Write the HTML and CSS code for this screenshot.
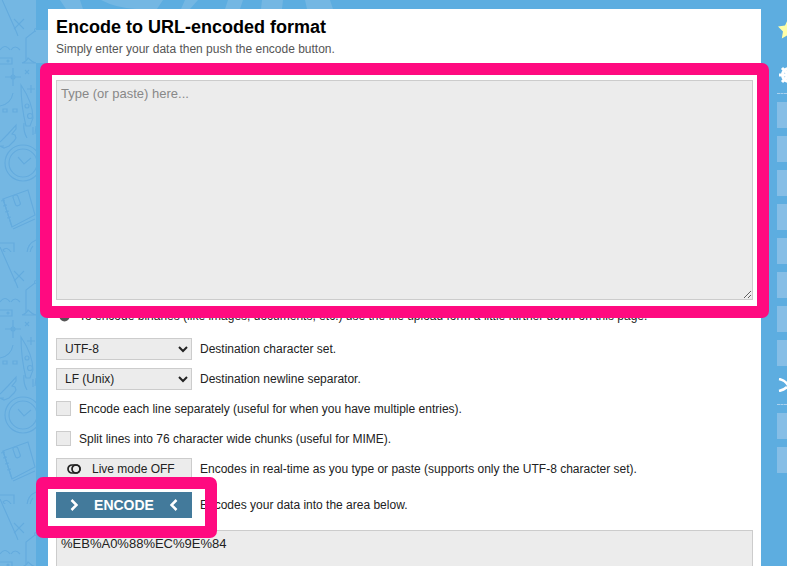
FILE: index.html
```html
<!DOCTYPE html>
<html lang="en">
<head>
<meta charset="utf-8">
<title>Encode to URL-encoded format</title>
<link rel="stylesheet" href="styles.css">
</head>
<body>
<svg class="backdrop" width="787" height="566" aria-hidden="true">
  <defs>
    <pattern id="doodle" width="48" height="252" patternUnits="userSpaceOnUse">
      <g class="doodle-lines">
        <path d="M14 19l10 10M24 19l-10 10"/>
        <path d="M0 -5l16 36 2 5M0 247l16 36"/>
        <path d="M26 60V38l9-7"/><circle cx="36" cy="30" r="1.5"/>
        <path d="M22 63q5-2 6-5q4 4 8 5z"/>
        <path d="M0 50q5-7 10 0M11 50q4-6 9 0"/>
        <path d="M-2 58h14v6H-2z"/><circle cx="8" cy="61" r="1"/>
        <path d="M5 77h16M13 68v18"/><circle cx="13" cy="77" r="2"/>
        <path d="M25 70l4 4M29 70l-4 4M27 89h8M31 85v8"/>
        <path d="M0 106q11-2 13-13"/>
        <path d="M3 109h4v3H3zM13 109h4v3H13z"/>
        <path d="M21 85q12 18 12 33l-3 8h-4q-5-20-5-41z"/>
        <circle cx="30" cy="116" r="2.5"/><circle cx="27" cy="106" r="2"/>
        <path d="M24 123q-1 8 3 15M33 127v8M36 126l-1 8"/>
        <path d="M0 142l8-8 8-9v4l-4 5 3 1 1 3-2 3-5 5-5 2-4-2M0 146l4 0"/>
        <circle cx="23" cy="163" r="18"/><circle cx="23" cy="163" r="14"/>
        <path d="M18 157l6 7 7-6"/>
        <path d="M3 199l25-9 7 25-23 12z"/>
        <path d="M3 199l9 28M1 201l4-1M3 206l4-1M5 212l4-1M7 218l4-1"/>
        <path d="M35 219l-22 10"/><rect x="14" y="195" width="5" height="11" rx="2" transform="rotate(-20 16 200)"/>
        <path d="M-2 243h16v14H-2zM-2 262h18M3 250q4-4 8 2q-4 3-8-2z"/>
        <path d="M36 240q-9 4-9 14t8 12M33 246q-3 3-3 8t3 7"/>
        <path d="M31 263v8"/>
      </g>
    </pattern>
  </defs>
  <path class="band" d="M0 0H36V30L48 30V63H36V566H0Z"/>
  <rect class="doodle-fill" x="0" y="0" width="36" height="566"/>
  <path class="band" d="M60 0H80L83 9H66ZM91 0H163L157 9H136Q116 8 101 0ZM185 0H198L190 9H181ZM228 0H243L240 9H225ZM262 0H283L282 9H261ZM305 0H330L333 9H307Z"/>
</svg>

<main class="card">
  <h1 class="title">Encode to URL-encoded format</h1>
  <p class="intro">Simply enter your data then push the encode button.</p>
  <textarea class="field source" placeholder="Type (or paste) here..."></textarea>
  <div class="note">
    <svg class="note-icon" viewBox="0 0 12 12" aria-hidden="true"><circle cx="6" cy="6" r="5.5"/></svg>
    <span>To encode binaries (like images, documents, etc.) use the file upload form a little further down on this page.</span>
  </div>
  <div class="row first-select">
    <select class="control"><option>UTF-8</option></select>
    <span>Destination character set.</span>
  </div>
  <div class="row second-select">
    <select class="control"><option>LF (Unix)</option></select>
    <span>Destination newline separator.</span>
  </div>
  <label class="row check first-check"><input type="checkbox" class="box"><span>Encode each line separately (useful for when you have multiple entries).</span></label>
  <label class="row check second-check"><input type="checkbox" class="box"><span>Split lines into 76 character wide chunks (useful for MIME).</span></label>
  <div class="row live-row">
    <button class="control live" type="button">
      <svg class="toggle" viewBox="0 0 14 10" aria-hidden="true"><rect x="1" y="1" width="12" height="8" rx="4"/><circle cx="9" cy="5" r="4"/></svg>
      Live mode OFF
    </button>
    <span>Encodes in real-time as you type or paste (supports only the UTF-8 character set).</span>
  </div>
  <div class="row encode-row">
    <button class="encode" type="button">
      <svg class="chev" viewBox="0 0 8 12" aria-hidden="true"><path d="M1.5 1l5 5-5 5"/></svg>
      ENCODE
      <svg class="chev" viewBox="0 0 8 12" aria-hidden="true"><path d="M6.5 1l-5 5 5 5"/></svg>
    </button>
    <span>Encodes your data into the area below.</span>
  </div>
  <textarea class="field output" readonly>%EB%A0%88%EC%9E%84</textarea>
</main>

<aside class="side">
  <svg class="star" viewBox="0 0 20 20" aria-hidden="true"><path d="M10 0l3 6.5 7 1-5 5 1.2 7L10 16l-6.2 3.5 1.2-7-5-5 7-1z"/></svg>
  <div class="side-head gear-head">
    <svg class="gear" viewBox="0 0 20 20" aria-hidden="true"><circle cx="10" cy="10" r="6.5"/><path d="M10 0v20M0 10h20M3 3l14 14M17 3L3 17"/></svg>
  </div>
  <div class="side-list">
    <div class="side-item"></div><div class="side-item"></div><div class="side-item"></div><div class="side-item"></div>
    <div class="side-item"></div><div class="side-item"></div><div class="side-item"></div><div class="side-item"></div>
  </div>
  <div class="side-head tool-head">
    <svg class="tools" viewBox="0 0 20 14" aria-hidden="true"><path d="M1 1q6 1 9 6t9 6M1 13q5-1 8-4M12 5q3-3 7-4"/></svg>
  </div>
  <div class="side-list">
    <div class="side-item"></div><div class="side-item"></div>
  </div>
</aside>

<div class="marker marker-source"></div>
<div class="marker marker-encode"></div>
</body>
</html>
```
FILE: styles.css
```css
html, body {
  margin: 0;
  height: 566px;
  overflow: hidden;
}
body {
  position: relative;
  display: flex;
  align-items: flex-start;
  background: #5dade0;
  font: 12px "Liberation Sans", Arial, sans-serif;
  color: #222;
}
.backdrop {
  position: absolute;
  left: 0;
  top: 0;
}
.band { fill: #74b7e3; }
.doodle-fill { fill: url(#doodle); }
.doodle-lines {
  fill: none;
  stroke: #63abde;
  stroke-width: 1.2;
}

.card {
  position: relative;
  flex: none;
  box-sizing: border-box;
  width: 713px;
  height: 557px;
  margin: 9px 0 0 48px;
  padding: 7px 8px 0;
  background: #fff;
  overflow: hidden;
}
.title {
  margin: 0;
  font-size: 18px;
  line-height: 22px;
  font-weight: 700;
  color: #000;
}
.intro {
  margin: 4px 0 0;
  line-height: 14px;
  color: #555;
}
.field {
  display: block;
  box-sizing: border-box;
  width: 697px;
  margin: 0;
  padding: 5px 4px;
  border: 1px solid #ccc;
  border-radius: 0;
  background: #ececec;
  color: #222;
  outline: none;
  font: 13px/16px "Liberation Sans", Arial, sans-serif;
}
.field::placeholder { color: #888; }
.source {
  height: 220px;
  margin-top: 24px;
}
.output {
  height: 120px;
  margin-top: 12px;
}
.note {
  display: flex;
  align-items: center;
  gap: 9px;
  height: 14px;
  margin: 9px 0 0 3px;
}
.note-icon {
  width: 11px;
  height: 11px;
  fill: #555;
}
.row {
  display: flex;
  align-items: center;
  gap: 8px;
}
.first-select { margin-top: 15px; }
.second-select { margin-top: 8px; }
.first-check { margin-top: 11px; }
.second-check { margin-top: 15px; }
.live-row { margin-top: 12px; }
.encode-row { margin-top: 12px; }
.control {
  box-sizing: border-box;
  width: 136px;
  height: 22px;
  margin: 0;
  border: 1px solid #ccc;
  border-radius: 0;
  background-color: #ececec;
  color: #222;
  font: 12px "Liberation Sans", Arial, sans-serif;
  padding-left: 4px;
}
.check { height: 15px; }
.box {
  appearance: none;
  box-sizing: border-box;
  width: 15px;
  height: 15px;
  margin: 0;
  border: 1px solid #ccc;
  background: #ececec;
}
.live {
  display: flex;
  align-items: center;
  gap: 11px;
  padding: 0 0 0 10px;
}
.toggle {
  width: 14px;
  height: 10px;
  fill: none;
  stroke: #222;
  stroke-width: 1.7;
}
.encode {
  display: flex;
  align-items: center;
  justify-content: space-between;
  box-sizing: border-box;
  width: 136px;
  height: 26px;
  margin: 0;
  padding: 0 14px;
  border: 0;
  background: #437a9b;
  color: #fff;
  font: 700 14px "Liberation Sans", Arial, sans-serif;
}
.chev {
  width: 8px;
  height: 12px;
  fill: none;
  stroke: #fff;
  stroke-width: 2.5;
}

.side {
  flex: none;
  width: 10px;
  height: 566px;
  margin-left: 16px;
  padding-top: 19px;
  box-sizing: border-box;
  overflow: hidden;
  position: relative;
}
.star {
  display: block;
  width: 20px;
  height: 20px;
  margin-left: 1px;
  fill: #ffffa8;
}
.side-head {
  border-bottom: 1px dashed #a9d1ee;
  margin-bottom: 8px;
}
.gear-head { margin-top: 26px; height: 28px; }
.tool-head { margin-top: 12px; height: 26px; }
.gear {
  display: block;
  width: 20px;
  height: 20px;
  margin-left: 2px;
  fill: none;
  stroke: #fff;
  stroke-width: 3;
}
.tools {
  display: block;
  width: 20px;
  height: 14px;
  margin: 1px 0 0 1px;
  fill: none;
  stroke: #fff;
  stroke-width: 2.5;
}
.side-list {
  display: flex;
  flex-direction: column;
  gap: 8px;
}
.side-item {
  height: 26px;
  background: #86bee6;
}

.marker {
  position: absolute;
  box-sizing: border-box;
  border: 12px solid #ff0a80;
  border-radius: 7px;
}
.marker-source {
  left: 40px;
  top: 63px;
  width: 729px;
  height: 255px;
}
.marker-encode {
  left: 36px;
  top: 477px;
  width: 181px;
  height: 61px;
}
```
